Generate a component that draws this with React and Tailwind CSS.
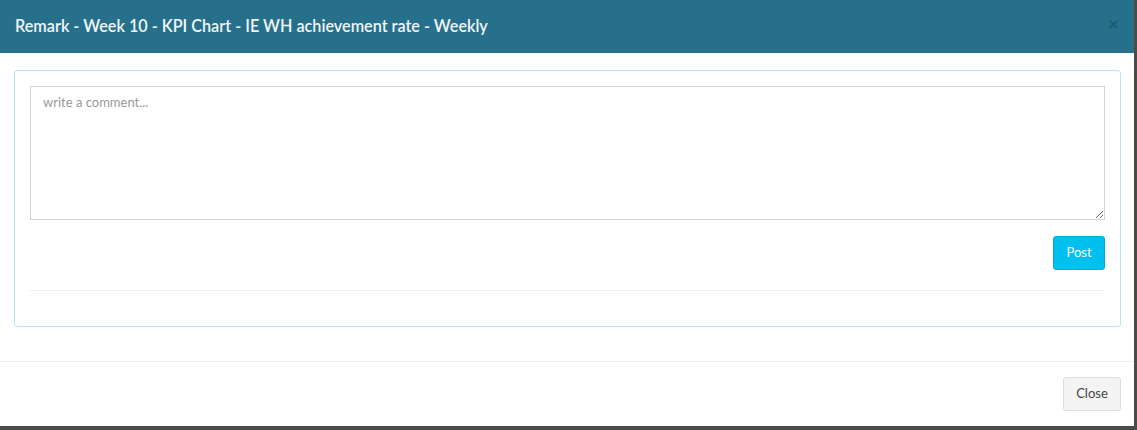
export default function App() {
  return (
    <div className="h-[430px] w-[1137px] overflow-hidden bg-[#4a4a4a] font-['Lato','Open_Sans',sans-serif]">
      <div className="flex h-[426px] w-[1134px] flex-col bg-white">
        {/* header */}
        <div className="flex h-[53px] shrink-0 items-center justify-between bg-[#26708b] pl-[15px] pr-[15px]">
          <h4 className="text-[16.2px] font-semibold text-[#f2f6f8]">
            Remark - Week 10 - KPI Chart - IE WH achievement rate - Weekly
          </h4>
          <span className="mb-[6px] text-[19px] leading-none text-[#1d5669]">×</span>
        </div>

        {/* body */}
        <div className="h-[308px] shrink-0 pl-[14px] pr-[13px] pt-[17px]">
          <div className="rounded-[3px] border border-[#b5e7f1] px-[15px] pt-[15px] pb-[35px]">
            <textarea
              placeholder="write a comment..."
              className="block h-[134px] w-full resize-y border border-[#d2d2dc] px-3 py-[6px] text-[13px] text-[#555] outline-none placeholder:text-[#999]"
            />
            <div className="mt-4 flex justify-end">
              <button className="h-[34px] w-[52px] rounded-[3px] border border-[#00acd6] bg-[#00c0ef] text-[13px] text-white">
                Post
              </button>
            </div>
            <div className="mt-5 border-t border-[#eee]" />
          </div>
        </div>

        {/* footer */}
        <div className="flex flex-1 items-start justify-end border-t border-[#f0f0f0] pt-[15px] pr-[13px]">
          <button className="h-[34px] w-[58px] rounded-[3px] border border-[#ddd] bg-[#f4f4f4] text-[13px] text-[#444]">
            Close
          </button>
        </div>
      </div>
    </div>
  )
}
